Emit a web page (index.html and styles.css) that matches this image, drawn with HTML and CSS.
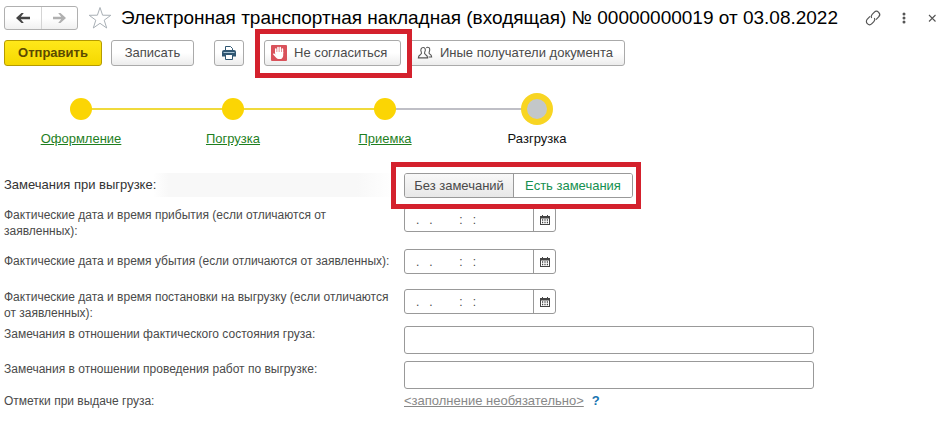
FILE: index.html
```html
<!DOCTYPE html>
<html lang="ru">
<head>
<meta charset="utf-8">
<meta name="viewport" content="width=device-width, initial-scale=1">
<title>Электронная транспортная накладная</title>
<link rel="stylesheet" href="styles.css">
</head>
<body>
<header class="header">
  <div class="history">
    <button class="history-btn" aria-label="Назад"><svg width="16" height="12" viewBox="0 0 16 12"><path d="M1 6 6.500 1h2.300L5.800 4.800H15v2.400H5.800L8.800 11H6.500z" fill="#444"/></svg></button>
    <button class="history-btn" aria-label="Вперед"><svg width="16" height="12" viewBox="0 0 16 12"><path d="M15 6 9.500 1H7.200l3 3.800H2v2.400h8.200L7.200 11h2.300z" fill="#b0b0b0"/></svg></button>
  </div>
  <button class="icon-btn star" aria-label="В избранное"><svg width="24" height="24" viewBox="0 0 24 24"><path d="m12 1.500 2.600 7.700 8.200.1-6.600 4.900 2.500 7.800L12 17.300 5.300 22l2.500-7.800-6.600-4.900 8.200-.1z" fill="#fff" stroke="#a9b0b6"/></svg></button>
  <h1 class="title">Электронная транспортная накладная (входящая) № 00000000019 от 03.08.2022</h1>
  <div class="window-tools">
    <button class="icon-btn" aria-label="Ссылка"><svg width="18" height="18" viewBox="0 0 18 18"><g transform="rotate(-45 9 9)" fill="none" stroke="#555" stroke-width="1.2"><path d="M8 5.800H4.200a3.200 3.200 0 0 0 0 6.400H7a3.200 3.200 0 0 0 3-2.200M10 12.200h3.800a3.200 3.200 0 0 0 0-6.400H11A3.200 3.200 0 0 0 8 8"/></g></svg></button>
    <button class="icon-btn" aria-label="Меню"><svg width="12" height="12" viewBox="0 0 12 12"><g fill="#555"><circle cx="6" cy="2" r="1.500"/><circle cx="6" cy="6" r="1.500"/><circle cx="6" cy="10" r="1.500"/></g></svg></button>
    <button class="icon-btn" aria-label="Закрыть"><svg width="12" height="12" viewBox="0 0 12 12"><path d="m3 3 6.500 6.500M9.500 3 3 9.500" stroke="#555" stroke-width="1.100"/></svg></button>
  </div>
</header>

<div class="toolbar">
  <button class="btn btn-primary">Отправить</button>
  <button class="btn btn-save">Записать</button>
  <button class="btn btn-print" aria-label="Печать"><svg width="16" height="16" viewBox="0 0 16 16"><path d="M4.500 6V1.500h5l2 2V6" fill="#fff" stroke="#2f5672"/><path d="M1 7a2 2 0 0 1 2-2h10a2 2 0 0 1 2 2v4.500H1z" fill="#2f5672"/><path d="M2.500 7.500h11" stroke="#a8c4d6"/><path d="M4.500 9.500h7v5h-7z" fill="#fff" stroke="#2f5672"/></svg></button>
  <div class="marked marked-reject">
    <button class="btn btn-reject"><svg width="16" height="16" viewBox="0 0 16 16"><rect width="16" height="16" rx="1" fill="#d9525b"/><path d="M4.800 8V4M7 7V2.500M9.200 7V2.500M11.400 8V4" stroke="#fff" stroke-width="1.600" stroke-linecap="round"/><path d="M4 7h8.200v3.500c0 1.500-1.200 3.500-2.500 3.500H7.500C6 14 4.500 12 2.200 9.500c-.5-.8.5-1.500 1.300-.8L4.500 9.500z" fill="#fff"/></svg>Не согласиться</button>
  </div>
  <button class="btn btn-people"><svg width="16" height="16" viewBox="0 0 18 16"><path d="M10.500 2.300C11 1.600 11.600 1.300 12.300 1.500c2.200.3 2.500 2.800 1.500 5-.6 1.300-.5 2 .5 2.600 1.500.8 2.200 1.200 2.200 3.400h-3.500M7 1.800c2.500 0 3 2.800 1.700 5.200-.7 1.300-.3 2 .8 2.700 1.500.9 2.500 1.300 2.500 3.800H1.500c0-2.500 1-2.900 2.500-3.800 1.100-.7 1.500-1.400.8-2.700C3.700 4.600 4.500 1.800 7 1.800z" fill="none" stroke="#555" stroke-width="1.200"/></svg>Иные получатели документа</button>
</div>

<ol class="steps">
  <li class="step"><span class="dot"></span><a href="#">Оформление</a></li>
  <li class="step done"><span class="dot"></span><a href="#">Погрузка</a></li>
  <li class="step done"><span class="dot"></span><a href="#">Приемка</a></li>
  <li class="step current"><span class="dot"></span><span>Разгрузка</span></li>
</ol>

<form class="form">
  <span class="label label-main" id="remarks">Замечания при выгрузке:</span>
  <div class="marked marked-choice">
    <div class="choice" role="group" aria-labelledby="remarks">
      <button type="button" class="choice-btn choice-none">Без замечаний</button>
      <button type="button" class="choice-btn choice-some">Есть замечания</button>
    </div>
  </div>

  <label class="label" for="arrival">Фактические дата и время прибытия (если отличаются от заявленных):</label>
  <div class="date">
    <input id="arrival" type="text" value=".   .        :   :">
    <button type="button" class="calendar" aria-label="Выбрать дату"><svg width="10" height="10" viewBox="0 0 10 10"><path d="M0 1h2V0h1v1h4V0h1v1h2v9H0z" fill="#444"/><path d="M1 3.500h8V9H1z" fill="#fff"/><path d="M2 5h6M2 7.500h6" stroke="#444" stroke-width="1.300" stroke-dasharray="1.200 1.200"/></svg></button>
  </div>

  <label class="label label-single" for="departure">Фактические дата и время убытия (если отличаются от заявленных):</label>
  <div class="date">
    <input id="departure" type="text" value=".   .        :   :">
    <button type="button" class="calendar" aria-label="Выбрать дату"><svg width="10" height="10" viewBox="0 0 10 10"><path d="M0 1h2V0h1v1h4V0h1v1h2v9H0z" fill="#444"/><path d="M1 3.500h8V9H1z" fill="#fff"/><path d="M2 5h6M2 7.500h6" stroke="#444" stroke-width="1.300" stroke-dasharray="1.200 1.200"/></svg></button>
  </div>

  <label class="label" for="unloading">Фактические дата и время постановки на выгрузку (если отличаются от заявленных):</label>
  <div class="date">
    <input id="unloading" type="text" value=".   .        :   :">
    <button type="button" class="calendar" aria-label="Выбрать дату"><svg width="10" height="10" viewBox="0 0 10 10"><path d="M0 1h2V0h1v1h4V0h1v1h2v9H0z" fill="#444"/><path d="M1 3.500h8V9H1z" fill="#fff"/><path d="M2 5h6M2 7.500h6" stroke="#444" stroke-width="1.300" stroke-dasharray="1.200 1.200"/></svg></button>
  </div>

  <label class="label" for="cargo">Замечания в отношении фактического состояния груза:</label>
  <input class="text" id="cargo" type="text">

  <label class="label" for="works">Замечания в отношении проведения работ по выгрузке:</label>
  <input class="text" id="works" type="text">

  <span class="label">Отметки при выдаче груза:</span>
  <div class="note"><a class="note-link" href="#">&lt;заполнение необязательно&gt;</a><a class="help" href="#">?</a></div>
</form>
</body>
</html>
```
FILE: styles.css
```css
* {
  box-sizing: border-box;
}

body {
  margin: 0;
  padding: 4px 4px 0;
  background: #fff;
  color: #4a4a4a;
  font: 12px/16px "Liberation Sans", Arial, sans-serif;
}

button,
input {
  margin: 0;
  padding: 0;
  color: inherit;
  font: inherit;
}

svg {
  display: block;
  flex: none;
}

.header {
  display: flex;
  align-items: center;
  height: 28px;
}

.history {
  display: flex;
  width: 74px;
  height: 24px;
  border: 1px solid #b0b0b0;
  border-radius: 3px;
  background: linear-gradient(#fff 50%, #f0f0f0);
}

.history-btn {
  display: flex;
  flex: 1;
  align-items: center;
  justify-content: center;
  border: 0;
  background: none;
}

.history-btn + .history-btn {
  border-left: 1px solid #d4d4d4;
}

.icon-btn {
  border: 0;
  background: none;
}

.star {
  margin: 0 9px 0 10px;
}

.title {
  flex: 1;
  min-width: 0;
  margin: 0;
  color: #000;
  font-size: 19px;
  font-weight: 400;
  line-height: 24px;
  white-space: nowrap;
}

.window-tools {
  display: flex;
  gap: 16px;
  align-items: center;
  margin-right: 2px;
}

.toolbar {
  display: flex;
  height: 26px;
  margin-top: 8px;
}

.btn {
  display: flex;
  gap: 7px;
  align-items: center;
  justify-content: center;
  height: 26px;
  border: 1px solid #aaa;
  border-radius: 3px;
  background: linear-gradient(#fff 50%, #ececec);
  font-size: 13px;
  white-space: nowrap;
}

.btn-primary {
  width: 98px;
  border-color: #b59b00;
  background: linear-gradient(#ffe81a, #f5d800);
  color: #5c4a00;
  font-weight: 700;
}

.btn-save {
  width: 83px;
  margin-left: 9px;
}

.btn-print {
  width: 30px;
  margin-left: 20px;
}

.btn-reject {
  justify-content: flex-start;
  width: 137px;
  padding-left: 6px;
}

.btn-people {
  justify-content: flex-start;
  width: 217px;
  margin-left: 7px;
  padding-left: 8px;
}

/* Red frame around a highlighted control */
.marked {
  position: relative;
}

.marked::after {
  position: absolute;
  z-index: 1;
  inset: -11px;
  border: 5px solid #d4212d;
  content: "";
  pointer-events: none;
}

.marked-reject {
  margin-left: 20px;
}

.marked-reject::after {
  inset: -11px -11px -12px -9px;
}

.marked-choice::after {
  inset: -11px -8px -11px -13px;
}

.steps {
  display: grid;
  grid-template-columns: repeat(4, 152px);
  margin: 27px 0 0 1px;
  padding: 0;
  list-style: none;
}

.step {
  position: relative;
  display: grid;
  grid-template-rows: 32px 16px;
  row-gap: 6px;
  place-items: center;
  color: #111;
  font-size: 13px;
}

.step + .step::before {
  position: absolute;
  top: 15px;
  right: 50%;
  width: 100%;
  height: 2px;
  background: #f0da3c;
  content: "";
}

.step.current::before {
  background: #bfbfc6;
}

.dot {
  z-index: 1;
  width: 22px;
  height: 22px;
  border-radius: 50%;
  background: #fbd504;
}

.current .dot {
  width: 32px;
  height: 32px;
  border: 6px solid #f8d522;
  background: #c3c7c9;
}

.step a {
  color: #1f7f1f;
}

.form {
  display: grid;
  grid-template-rows: 27px 35px 33px 30px 28px 25px 16px;
  grid-template-columns: 392px minmax(0, 410px);
  gap: 7px 8px;
  margin-top: 26px;
}

.label {
  line-height: 16px;
}

.label-main {
  height: 24px;
  background: linear-gradient(90deg, #fff 38%, #f8f8f8 42%, #f8f8f8 90%, #fff);
  color: #333;
  font-size: 13px;
  line-height: 24px;
}

.label-single {
  line-height: 25px;
}

.marked-choice {
  width: 229px;
  height: 25px;
}

.choice {
  display: flex;
  height: 25px;
  border: 1px solid #999;
  border-radius: 3px;
  overflow: hidden;
}

.choice-btn {
  border: 0;
  background: #fff;
  font-size: 13px;
}

.choice-none {
  width: 109px;
  border-right: 1px solid #999;
  background: linear-gradient(#f8f8f8, #e8e8e8);
}

.choice-some {
  flex: 1;
  color: #159050;
}

.date {
  display: flex;
  width: 152px;
  height: 25px;
  border: 1px solid #999;
  border-radius: 3px;
}

.date input {
  flex: 1;
  min-width: 0;
  padding-left: 11px;
  border: 0;
  background: none;
}

.calendar {
  display: flex;
  align-items: center;
  justify-content: center;
  width: 22px;
  border: 0;
  border-left: 1px solid #999;
  background: none;
}

.text {
  width: 100%;
  height: 28px;
  padding: 0 6px;
  border: 1px solid #999;
  border-radius: 3px;
  background: #fff;
}

.note {
  display: flex;
  gap: 8px;
}

.note-link {
  color: #888;
  font-size: 13px;
}

.help {
  color: #1874b0;
  font-size: 13px;
  font-weight: 700;
  text-decoration: none;
}
```
